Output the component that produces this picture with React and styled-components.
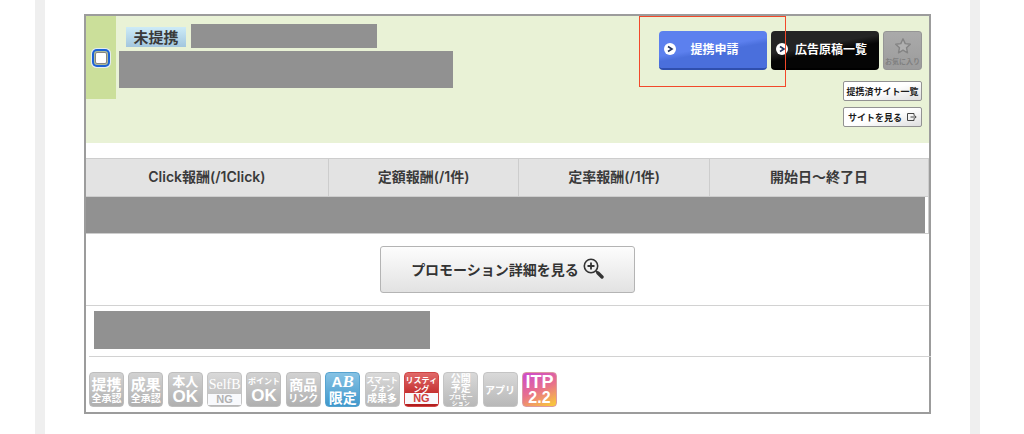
import React from 'react';
import styled, { createGlobalStyle, css } from 'styled-components';

const sans = `'Noto Sans CJK JP', sans-serif`;
const latin = `'Liberation Sans', 'Noto Sans CJK JP', sans-serif`;

const GlobalStyle = createGlobalStyle`
  * {
    box-sizing: border-box;
  }

  body {
    margin: 0;
    background-color: #fff;
    color: #3a3a3a;
    font-family: ${sans};
    font-size: 14px;
  }

  button {
    margin: 0;
    padding: 0;
    cursor: pointer;
    font-family: inherit;
  }

  a {
    text-decoration: none;
  }
`;

const Page = styled.main`
  margin: 0 44px 0 35px;
  padding: 14px 39px 20px;
  border: solid #efefef;
  border-width: 0 10px;
`;

const Card = styled.article`
  border: 2px solid #9c9c9c;
`;

const Header = styled.header`
  display: flex;
  align-items: flex-start;
  margin-bottom: 15px;
  background-color: #e9f2d6;
`;

const SelectCell = styled.label`
  flex: none;
  display: flex;
  align-items: center;
  justify-content: center;
  width: 30px;
  height: 83px;
  background-color: #cbdf9a;
`;

const Checkbox = styled.input`
  appearance: none;
  width: 12px;
  height: 12px;
  margin: 0;
  border: 1px solid #858585;
  border-radius: 2px;
  background-color: #fff;
  box-shadow: 0 0 0 1px #b0bd98, 0 0 0 3px #1b62d6, 0 0 0 4px #e4ecf2;

  &:checked {
    background-color: #1b62d6;
  }
`;

const Info = styled.div`
  flex: 1;
  padding: 8px 0 0 3px;
`;

const TitleRow = styled.div`
  display: flex;
  margin-bottom: 3px;
`;

const Status = styled.span`
  width: 60px;
  height: 20px;
  margin: 3px 5px 1px 7px;
  background: linear-gradient(#cdebf7, #a3c6de);
  font-size: 15px;
  font-weight: 700;
  line-height: 19px;
  text-align: center;
`;

const Mask = styled.div`
  width: ${(props) => props.$width};
  height: ${(props) => props.$height};
  background-color: #919191;
`;

const Actions = styled.div`
  display: flex;
  flex-direction: column;
  align-items: flex-end;
  padding: 15px 7px 16px 0;
`;

const MainActions = styled.div`
  display: flex;
  gap: 4px;
  margin-bottom: 11px;
`;

const SubActions = styled.div`
  display: flex;
  flex-direction: column;
  gap: 6px;
`;

const Highlighted = styled.div`
  position: relative;

  &::after {
    content: '';
    position: absolute;
    inset: -15px -19px -17px -20px;
    border: 1px solid #f2492a;
    pointer-events: none;
  }
`;

const ActionButton = styled.button`
  display: flex;
  align-items: center;
  width: 108px;
  height: 39px;
  padding: 0 14px 2px 5px;
  border: 0;
  border-bottom: 2px solid #2f4fae;
  border-radius: 4px;
  background: linear-gradient(170deg, #5c80ee 45%, #4a6fdc 55%);
  color: #fff;
  font-size: 12px;
  font-weight: 700;

  ${(props) =>
    props.$dark &&
    css`
      padding-right: 5px;
      border-bottom-color: #000;
      background: linear-gradient(170deg, #242424 40%, #050505 55%);
    `}

  svg {
    flex: none;
  }

  span {
    flex: 1;
    text-align: center;
    white-space: nowrap;
  }
`;

const FavoriteButton = styled.button`
  display: flex;
  flex-direction: column;
  align-items: center;
  width: 39px;
  height: 39px;
  padding-top: 5px;
  border: 1px solid #959595;
  border-radius: 3px;
  background: linear-gradient(#aaa, #9c9c9c);
  color: #808080;
  font-size: 7px;
  font-weight: 700;
  line-height: 12px;
  white-space: nowrap;
`;

const SubLink = styled.a`
  display: flex;
  align-items: center;
  justify-content: center;
  gap: 5px;
  width: 79px;
  height: 20px;
  border: 1px solid #929292;
  border-radius: 2px;
  background: linear-gradient(165deg, #fff 50%, #dedede);
  color: #1c1c1c;
  font-size: 9px;
  font-weight: 700;
  white-space: nowrap;
`;

const RewardTable = styled.table`
  width: 100%;
  border-spacing: 0;
  table-layout: fixed;

  th {
    height: 39px;
    padding: 0 0 1px;
    border: solid #cdcdcd;
    border-width: 1px 1px 1px 0;
    background-color: #e3e3e3;
    font-family: Inter, ${sans};
    font-size: 14px;
    font-weight: 600;
    line-height: 20px;
  }

  td {
    padding: 0 3px 0 0;
    border: solid #cdcdcd;
    border-width: 0 1px 1px 0;
  }
`;

const DetailRow = styled.div`
  display: flex;
  justify-content: center;
  padding: 12px 0;
  border-bottom: 1px solid #d2d2d2;
`;

const DetailButton = styled.button`
  display: flex;
  align-items: center;
  justify-content: center;
  gap: 4px;
  width: 255px;
  height: 47px;
  padding-bottom: 2px;
  border: 1px solid #b4b4b4;
  border-radius: 3px;
  background: linear-gradient(#fdfdfd, #e2e2e2);
  color: #333;
  font-size: 14px;
  font-weight: 700;

  svg {
    flex: none;
  }
`;

const NoteRow = styled.div`
  padding: 5px 8px 7px;
`;

const TileRow = styled.div`
  margin: 0 -2px 0 3px;
  padding: 15px 0 5px;
  border-top: 1px solid #d2d2d2;
`;

const TileList = styled.ul`
  display: flex;
  justify-content: space-between;
  width: 468px;
  max-width: 100%;
  margin: 0;
  padding: 0;
  list-style: none;
`;

const tileColors = {
  gray: css`
    border-color: #bdbdbd;
    background: linear-gradient(#d2d2d2, #b0b0b0);
  `,
  light: css`
    border-color: #c4c4c4;
    background: linear-gradient(#d9d9d9, #b8b8b8);
  `,
  blue: css`
    border-color: #56a3cf;
    background: linear-gradient(#86c2e4, #3f97cb);
  `,
  red: css`
    border-color: #cf4444;
    background: linear-gradient(#e06a6a, #c53131 60%, #b11c1c);
  `,
  sunset: css`
    border-color: #dd9aa0;
    background: linear-gradient(155deg, #d04fc4 10%, #e8708c 50%, #f9c63c 95%);
  `,
};

const Tile = styled.li`
  display: flex;
  flex-direction: column;
  align-items: center;
  justify-content: center;
  width: 35px;
  height: 35px;
  border: 1px solid;
  border-radius: 4px;
  color: #fff;
  ${(props) => tileColors[props.$color]}
`;

const TileLine = styled.span`
  font-family: ${(props) => (props.$latin ? latin : sans)};
  font-size: ${(props) => props.$size}px;
  font-weight: ${(props) => (props.$thin ? 400 : 700)};
  line-height: ${(props) => props.$height}px;
  white-space: nowrap;

  ${(props) =>
    props.$serif &&
    css`
      font-family: 'Liberation Serif', serif;
    `}

  ${(props) =>
    props.$band &&
    css`
      width: 33px;
      background-color: #f8f9fc;
      color: ${props.$band};
      text-align: center;
    `}

  i {
    font-family: 'Liberation Serif', serif;
    font-size: 17px;
    line-height: 1px;
  }
`;

const tiles = [
  {
    color: 'gray',
    lines: [
      { text: '提携', size: 15, height: 16 },
      { text: '全承認', size: 10, height: 12 },
    ],
  },
  {
    color: 'gray',
    lines: [
      { text: '成果', size: 15, height: 16 },
      { text: '全承認', size: 10, height: 12 },
    ],
  },
  {
    color: 'gray',
    lines: [
      { text: '本人', size: 13, height: 14 },
      { text: 'OK', size: 17, height: 18, latin: true },
    ],
  },
  {
    color: 'light',
    lines: [
      { text: 'SelfB', size: 14, height: 19, serif: true, thin: true },
      { text: 'NG', size: 11, height: 11, latin: true, band: '#b0b0b0' },
    ],
  },
  {
    color: 'gray',
    lines: [
      { text: 'ポイント', size: 8, height: 13 },
      { text: 'OK', size: 17, height: 18, latin: true },
    ],
  },
  {
    color: 'gray',
    lines: [
      { text: '商品', size: 14, height: 16 },
      { text: 'リンク', size: 10, height: 12 },
    ],
  },
  {
    color: 'blue',
    lines: [
      { text: <>A<i>B</i></>, size: 15, height: 14, latin: true },
      { text: '限定', size: 14, height: 16 },
    ],
  },
  {
    color: 'light',
    lines: [
      { text: 'スマート', size: 8, height: 9 },
      { text: 'フォン', size: 8, height: 8 },
      { text: '成果多', size: 10, height: 12 },
    ],
  },
  {
    color: 'red',
    lines: [
      { text: 'リスティ', size: 8, height: 9 },
      { text: 'ング', size: 8, height: 9 },
      { text: 'NG', size: 11, height: 11, latin: true, band: '#d04040' },
    ],
  },
  {
    color: 'light',
    lines: [
      { text: '公開', size: 10, height: 10 },
      { text: '予定', size: 10, height: 10 },
      { text: 'プロモー', size: 6, height: 7 },
      { text: 'ション', size: 6, height: 6 },
    ],
  },
  {
    color: 'light',
    lines: [{ text: 'アプリ', size: 10, height: 14 }],
  },
  {
    color: 'sunset',
    lines: [
      { text: 'ITP', size: 18, height: 16, latin: true },
      { text: '2.2', size: 16, height: 16, latin: true },
    ],
  },
];

const ArrowIcon = () => (
  <svg width="12" height="12" viewBox="0 0 12 12" aria-hidden="true">
    <circle cx="6" cy="6" r="6" fill="#fff" />
    <path d="M4 3.5 8 6 4 8.5" fill="none" stroke="#25345f" strokeWidth="1.6" />
  </svg>
);

const StarIcon = () => (
  <svg width="18" height="18" viewBox="0 0 18 18" aria-hidden="true">
    <path
      d="M9 1.8 11.2 6.6l5.1.6-3.8 3.5 1 5.1L9 13.2l-4.5 2.6 1-5.1L1.7 7.2l5.1-.6z"
      fill="#b0b0b0"
      stroke="#848484"
      strokeWidth="1.4"
      strokeLinejoin="round"
    />
  </svg>
);

const ExitIcon = () => (
  <svg width="10" height="8" viewBox="0 0 10 8" aria-hidden="true">
    <path d="M7 2.5V.5H.5v7H7v-2M3.5 4H9M7.5 2.3 9.2 4 7.5 5.7" fill="none" stroke="#444" />
  </svg>
);

const ZoomIcon = () => (
  <svg width="21" height="21" viewBox="0 0 21 21" aria-hidden="true">
    <circle cx="8" cy="8" r="6.7" fill="none" stroke="#333" strokeWidth="1.6" />
    <path d="M8 4.5v7M4.5 8h7" stroke="#333" strokeWidth="1.8" />
    <path d="m13 13 2 2" stroke="#333" strokeWidth="2" />
    <path d="m15 15 4 4" stroke="#333" strokeWidth="3.4" strokeLinecap="round" />
  </svg>
);

export default function App() {
  return (
    <>
      <GlobalStyle />
      <Page>
        <Card>
          <Header>
            <SelectCell>
              <Checkbox type="checkbox" aria-label="選択" />
            </SelectCell>
            <Info>
              <TitleRow>
                <Status>未提携</Status>
                <Mask $width="186px" $height="24px" />
              </TitleRow>
              <Mask $width="334px" $height="37px" />
            </Info>
            <Actions>
              <MainActions>
                <Highlighted>
                  <ActionButton type="button">
                    <ArrowIcon />
                    <span>提携申請</span>
                  </ActionButton>
                </Highlighted>
                <ActionButton type="button" $dark>
                  <ArrowIcon />
                  <span>広告原稿一覧</span>
                </ActionButton>
                <FavoriteButton type="button">
                  <StarIcon />
                  お気に入り
                </FavoriteButton>
              </MainActions>
              <SubActions>
                <SubLink href="#sites">提携済サイト一覧</SubLink>
                <SubLink href="#site">
                  サイトを見る
                  <ExitIcon />
                </SubLink>
              </SubActions>
            </Actions>
          </Header>

          <RewardTable>
            <colgroup>
              <col style={{ width: '28.8%' }} />
              <col style={{ width: '22.6%' }} />
              <col style={{ width: '22.6%' }} />
              <col />
            </colgroup>
            <thead>
              <tr>
                <th>Click報酬(/1Click)</th>
                <th>定額報酬(/1件)</th>
                <th>定率報酬(/1件)</th>
                <th>開始日〜終了日</th>
              </tr>
            </thead>
            <tbody>
              <tr>
                <td colSpan={4}>
                  <Mask $width="100%" $height="36px" />
                </td>
              </tr>
            </tbody>
          </RewardTable>

          <DetailRow>
            <DetailButton type="button">
              プロモーション詳細を見る
              <ZoomIcon />
            </DetailButton>
          </DetailRow>

          <NoteRow>
            <Mask $width="336px" $height="38px" />
          </NoteRow>

          <TileRow>
            <TileList>
              {tiles.map((tile, i) => (
                <Tile key={i} $color={tile.color}>
                  {tile.lines.map((line, j) => (
                    <TileLine
                      key={j}
                      $size={line.size}
                      $height={line.height}
                      $latin={line.latin}
                      $serif={line.serif}
                      $thin={line.thin}
                      $band={line.band}
                    >
                      {line.text}
                    </TileLine>
                  ))}
                </Tile>
              ))}
            </TileList>
          </TileRow>
        </Card>
      </Page>
    </>
  );
}
